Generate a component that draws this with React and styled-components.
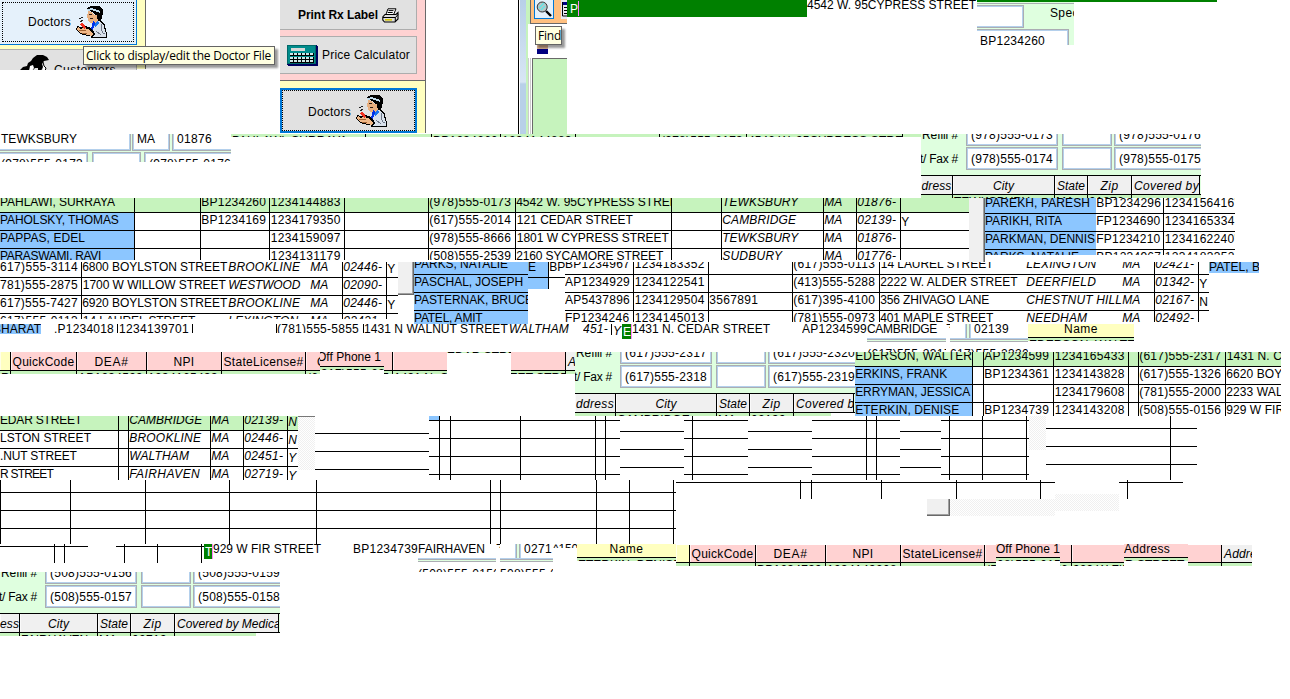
import React from "react";
import styled, { createGlobalStyle, css } from "styled-components";

const FONT = '"Liberation Sans", Arial, sans-serif';
const GREEN = "#c6f3bd";
const MINT = "#dfffdf";
const BLUE = "#8cc6ff";
const PINK = "#ffd2d2";
const YELLOW = "#ffffc0";
const GRAY = "#f0f0f0";

const Global = createGlobalStyle`
  body { margin: 0; background: #fff; overflow: hidden; }
  * { box-sizing: border-box; }
`;

const Page = styled.main`
  position: relative;
  display: flex;
  flex-direction: column;
  width: 1290px;
  height: 699px;
  overflow: hidden;
  background: #fff;
  font: 12px ${FONT};
  color: #000;
`;
const Band = styled.div`
  display: flex;
  align-items: flex-start;
  flex: none;
  height: ${(p) => p.$h}px;
`;
const Stack = styled.div`
  display: flex;
  flex-direction: column;
  flex: none;
  width: ${(p) => p.$w}px;
`;
const Line = styled.div`
  display: flex;
  flex: none;
  align-items: flex-start;
  height: ${(p) => p.$h}px;
  padding-left: ${(p) => p.$pl || 0}px;
`;
const Gap = styled.div`
  flex: none;
  width: ${(p) => p.$w || 1}px;
  height: ${(p) => p.$h || 1}px;
`;

/* A scrap of a window, cut at its edges. */
const Piece = styled.section`
  position: relative;
  flex: none;
  width: ${(p) => p.$w}px;
  height: ${(p) => p.$h}px;
  margin-top: ${(p) => p.$drop || 0}px;
  overflow: hidden;
  background: ${(p) => p.$bg || "transparent"};
`;
/* A scrap that covers part of another one. */
const Patch = styled.section`
  position: absolute;
  left: ${(p) => p.$x}px;
  top: ${(p) => p.$y || 0}px;
  width: ${(p) => p.$w}px;
  height: ${(p) => p.$h}px;
  overflow: hidden;
  background: ${(p) => p.$bg || "#fff"};
`;

/* ---------- text with whole-pixel digit advances ---------- */
const ctx = document.createElement("canvas").getContext("2d");
const measure = (s, font) => {
  ctx.font = font;
  return ctx.measureText(s).width;
};
const spacing = (s, w, { italic, bold, family = FONT, size = 12 }) => {
  const font = `${italic ? "italic " : ""}${bold ? "bold " : ""}${size}px ${family}`;
  const digits = (s.match(/\d/g) || []).length;
  const target = w || digits * 7 + measure(s.replace(/\d/g, ""), font);
  return (target - measure(s, font)) / s.length;
};

const Run = styled.span`
  display: block;
  flex: none;
  white-space: pre;
  line-height: 16px;
  font-style: ${(p) => (p.$italic ? "italic" : "normal")};
  font-weight: ${(p) => (p.$bold ? 700 : 400)};
  font-family: ${(p) => p.$family || FONT};
  font-size: ${(p) => p.$size || 12}px;
  letter-spacing: ${(p) => p.$ls}px;
  color: ${(p) => p.$color || "inherit"};
  margin-left: ${(p) => p.$ml || 0}px;
  margin-top: ${(p) => p.$mt || 0}px;
`;
const T = ({ s, w, italic, bold, family, size, color, ml, mt }) => (
  <Run
    $italic={italic}
    $bold={bold}
    $family={family}
    $size={size}
    $color={color}
    $ml={ml}
    $mt={mt}
    $ls={spacing(s, w, { italic, bold, family, size })}
  >
    {s}
  </Run>
);

/* A cell torn out of a table: text, sometimes with its right rule. */
const SlipBox = styled.div`
  flex: none;
  width: ${(p) => p.$w}px;
  height: ${(p) => p.$h || 15}px;
  overflow: hidden;
  background: ${(p) => p.$bg || "transparent"};
  border-right: ${(p) => (p.$line ? "1px solid #000" : "0")};
`;
const Slip = ({ w, h, bg, line, mt = -3, tw, ...rest }) => (
  <SlipBox $w={w} $h={h} $bg={bg} $line={line}>
    {rest.s && <T {...rest} w={tw} mt={mt} />}
  </SlipBox>
);

/* ---------- record tables ---------- */
const Rows = styled.div`
  display: flex;
  flex-direction: column;
  margin-top: ${(p) => p.$shift}px;
`;
const Row = styled.div`
  display: flex;
  flex: none;
  height: 18px;
  border-bottom: 1px solid #000;
  background: ${(p) => (p.$sel ? GREEN : "transparent")};
`;
const Cell = styled.div`
  display: flex;
  flex: none;
  width: ${(p) => p.$w}px;
  padding-left: ${(p) => p.$pad || 0}px;
  overflow: hidden;
  border-right: ${(p) => (p.$line ? "1px solid #000" : "0")};
  ${(p) => p.$bg && css`background: ${p.$bg};`}
`;

/* from: left edge of the cut; first: offset of the first rule.
   cols: [right edge, flags]; flags: l rule, i italic, b blue, y lowered, 0 no inset */
const Sheet = ({ from, w, h, first, cols, rows }) => (
  <Piece $w={w} $h={h}>
    <Rows $shift={first - 17}>
      {rows.map((r, ri) => (
        <Row key={ri} $sel={r.sel}>
          {cols.map(([end, f = "l"], i) => {
            const start = i ? cols[i - 1][0] : from - 1;
            const v = r.c && r.c[i];
            const [s, tw] = Array.isArray(v) ? v : [v];
            const pad = !s || f.includes("0") ? 0 : s[0] === "1" ? 0.8 : 0.2;
            return (
              <Cell
                key={i}
                $w={end - start}
                $line={f.includes("l")}
                $pad={pad}
                $bg={f.includes("b") && !r.sel ? BLUE : null}
              >
                {s && <T s={s} w={tw} italic={f.includes("i")} mt={f.includes("y") ? 1 : -1} />}
              </Cell>
            );
          })}
        </Row>
      ))}
    </Rows>
  </Piece>
);
const blank = (n) => Array.from({ length: n }, () => ({}));

/* ---------- column headings ---------- */
const HeadRow = styled.div`
  display: flex;
  height: ${(p) => p.$h}px;
  border-bottom: 1px solid #000;
`;
const HeadCell = styled.div`
  display: flex;
  flex: none;
  justify-content: ${(p) => (p.$start ? "flex-start" : "center")};
  width: ${(p) => p.$w}px;
  padding-top: ${(p) => p.$pt || 0}px;
  padding-left: ${(p) => (p.$start ? 2 : 0)}px;
  overflow: hidden;
  background: ${(p) => p.$bg};
  border-right: ${(p) => (p.$line ? "1px solid #000" : "0")};
  box-shadow: ${(p) => (p.$line ? "inset 1px 0 #ffffffa0" : "none")};
`;
/* items: [right edge, text, width, background, flags] */
const Headings = ({ from, h, pt, items }) => (
  <HeadRow $h={h}>
    {items.map(([end, s, w, bg, f = "l"], i) => (
      <HeadCell
        key={i}
        $w={end - (i ? items[i - 1][0] : from - 1)}
        $bg={bg}
        $pt={pt}
        $line={f.includes("l")}
        $start={f.includes("s")}
      >
        {s && <T s={s} w={w} italic={f.includes("i")} />}
      </HeadCell>
    ))}
  </HeadRow>
);
const Strip = styled.div`
  display: flex;
  align-items: flex-start;
  width: ${(p) => p.$w}px;
  height: ${(p) => p.$h}px;
  overflow: hidden;
  background: ${GREEN};
`;
const StripRow = ({ from, w, h, cols, vals }) => (
  <Strip $w={w} $h={h}>
    {cols.map((end, i) => (
      <Cell key={i} $w={end - (i ? cols[i - 1] : from - 1)} $line $pad={vals[i] ? 1 : 0}>
        {vals[i] ? <T s={vals[i]} mt={-1} /> : <Gap $h={h} />}
      </Cell>
    ))}
  </Strip>
);
const HeadScrap = ({ w, h, s, tw, bg, vals, center, ml = 0 }) => (
  <>
    <HeadRow $h={h}>
      <HeadCell $w={w} $bg={bg} $start={!center}>
        <T s={s} w={tw} mt={-3} ml={ml} />
      </HeadCell>
    </HeadRow>
    <Strip $w={w} $h={3}>
      <T s={vals} ml={1} mt={-1} />
    </Strip>
  </>
);

/* ---------- entry form ---------- */
const Field = styled.div`
  flex: none;
  display: flex;
  width: ${(p) => p.$w}px;
  height: 23px;
  margin-left: ${(p) => p.$ml || 0}px;
  padding: ${(p) => p.$pt ?? 3}px 0 0 ${(p) => p.$pl ?? 4}px;
  overflow: hidden;
  background: #fff;
  border: 1px solid #abadb3;
  box-shadow: inset 0 0 0 1px #b4d0ec;
`;
const FormRow = styled.div`
  display: flex;
  flex: none;
  height: 23px;
  margin-top: ${(p) => p.$mt}px;
`;
const Label = styled.div`
  display: flex;
  flex: none;
  justify-content: flex-end;
  width: 37px;
  padding-top: 4px;
  margin-right: 8px;
`;
const FormHead = styled.div`
  margin-top: 5px;
  border-top: 1px solid #000;
`;

const Form = ({ p, cols, heads, tail, tailW }) => (
  <Piece $w={280} $h={64}>
    <Piece $w={280} $h={61} $bg={MINT}>
      <FormRow $mt={-11}>
        <Label><T s="Refill #" w={36} /></Label>
        <Field $w={92}><T s={p[0]} /></Field>
        <Field $w={50} $ml={4} />
        <Field $w={100} $ml={2}><T s={p[1]} /></Field>
      </FormRow>
      <FormRow $mt={1}>
        <Label><T s="t/ Fax #" w={38} /></Label>
        <Field $w={92}><T s={p[2]} /></Field>
        <Field $w={50} $ml={4} />
        <Field $w={100} $ml={2}><T s={p[3]} /></Field>
      </FormRow>
      <FormHead>
        <Headings
          from={0}
          h={19}
          pt={2}
          items={cols.map((c, i) => [c, heads[i][0], heads[i][1], GRAY, "li" + (i === 4 ? "s" : "")])}
        />
      </FormHead>
    </Piece>
    <StripRow from={0} w={tailW} h={3} cols={cols.slice(0, 4)} vals={tail} />
  </Piece>
);

/* ---------- buttons and tooltips ---------- */
const Button = styled.div`
  position: relative;
  display: flex;
  flex: none;
  align-items: flex-start;
  width: ${(p) => p.$w}px;
  height: ${(p) => p.$h}px;
  margin: ${(p) => p.$m || "0"};
  padding: ${(p) => p.$p || "0"};
  background: ${(p) => (p.$hot ? "#e5f1fb" : "#e1e1e1")};
  border: ${(p) => (p.$focus ? "2px solid #0078d7" : p.$hot ? "1px solid #0078d7" : "1px solid #adadad")};
  border-left-width: ${(p) => (p.$flush ? 0 : p.$focus ? 2 : 1)}px;
`;
const FocusRing = styled.i`
  position: absolute;
  inset: ${(p) => p.$inset};
  border: 1px dotted #000;
`;
const Tip = styled.div`
  position: absolute;
  left: ${(p) => p.$x}px;
  top: ${(p) => p.$y}px;
  display: flex;
  width: ${(p) => p.$w}px;
  height: ${(p) => p.$h}px;
  padding: 1px 0 0 2px;
  background: #ffffe1;
  border: 1px solid #646464;
  box-shadow: 3px 3px 2px #0006;
`;
const Vert = styled.div`
  flex: none;
  width: ${(p) => p.$w}px;
  height: 134px;
  background: ${(p) => p.$bg};
`;
const Panel = styled.div`
  flex: none;
  width: ${(p) => p.$w}px;
  height: ${(p) => p.$h}px;
  padding-top: ${(p) => p.$pt || 0}px;
  background: ${(p) => p.$bg};
  border-right: 1px solid #696969;
  border-bottom: ${(p) => (p.$bb ? "1px solid #696969" : "0")};
`;
const Icon = styled.svg`
  flex: none;
  display: block;
  margin: ${(p) => p.$m || 0};
`;

const Doctor = ({ m }) => (
  <Icon width="33" height="33" viewBox="0 0 33 33" $m={m} shapeRendering="crispEdges">
    <path d="M19 14h4l4 2 2 3 1 5 1 3v5H15l-1-5 2-8z" fill="#000" />
    <path d="M19 15h4l3 2 2 3 1 5 1 2v4H16l-1-4 2-8z" fill="#d8e0ea" />
    <path d="M25 18v5l2 4h2M20 25l5 4" stroke="#707888" fill="none" />
    <path d="M10 3l2-2 4-1h6l3 1 2 3v4l-1 3-1 4h-3l-2-5-3-4-4-1z" fill="#000" />
    <path d="M12 5l4 1 2 3h3v2l1 3-3 3h-4l-2-1-1-3-1-2z" fill="#e8b080" />
    <path d="M11 3l5-1 8 3v2l-8-3-4 1z" fill="#c0dcec" />
    <path d="M13 8h3v1h-3zM14 12h3v1h-3z" fill="#302018" />
    <path d="M17 15l2 2-2 7v4l-2-2-1-3 2-3z" fill="#0030e8" />
    <path d="M22 14l1 3-4 4-1-1 2-4z" fill="#1874f0" />
    <path d="M1 20l3 1 4-1 5 1 4 3 2 4-2 3-5-1-5-1-4-2-3-3z" fill="#000" />
    <path d="M2 21l2 2 4-1 4 1 3 2 2 3-1 2-4-1-5-1-4-2-2-3z" fill="#f0b888" />
    <path d="M3 24l4 1 3-1M6 27l5 1" stroke="#a06030" fill="none" />
    <path d="M4 18l2-1 3 3 1 2-2 1-2-2z" fill="#f03020" />
    <path d="M3 12h2v1H3zM5 11h2v1H5zM4 15h1v-1h2v1H6v1H4z" fill="#222" />
  </Icon>
);
const Printer = () => (
  <Icon width="17" height="16" viewBox="0 0 17 16" $m="1px 0 0 4px">
    <path d="M6 .8h8l-2.5 6H3.8z" fill="#fff" stroke="#000" />
    <path d="M6.5 2.6h5M5.7 4.5h5" stroke="#000" />
    <path d="M3 6.5h11l2-2v6.5l-3 3H2.5L.8 12V9z" fill="#ddd" stroke="#000" strokeWidth="1.1" />
    <path d="M1 9.5h12.5L16 6.5M13.3 9.5v4.3" stroke="#000" fill="none" />
    <path d="M3 11.8h7" stroke="#d8c800" strokeWidth="1.6" />
  </Icon>
);
const Calculator = () => (
  <Icon width="31" height="21" viewBox="0 0 31 21" $m="8px 4px 0 7px" shapeRendering="crispEdges">
    <path d="M0 0h30v1h1v20H1v-1H0z" fill="#000060" />
    <path d="M0 0h29v19H0z" fill="#006868" />
    <path d="M1 1h27v17H1z" fill="#008c8c" />
    <path d="M4 3h14v3H4z" fill="#d8d8d8" />
    {[0, 1, 2, 3, 4, 5].map((i) => [8, 12, 15].map((y) => (
      <g key={i + "-" + y}>
        <rect x={3 + i * 4} y={y} width="4" height="3" fill="#000" />
        <rect x={3 + i * 4} y={y} width="3" height="2" fill="#d0e8e8" />
      </g>
    )))}
  </Icon>
);
const Customers = () => (
  <Icon width="30" height="16" viewBox="0 0 30 16" $m="5px 0 0 20px">
    <path d="M0 15l3-3 4-1 1-3 3-2 2-3 4-3 6 0 4 2 2 3-5 1-2 3 1 3-2 4h-3l0-3-3 0-3 3H0z" fill="#000" />
    <path d="M10 11l3-1 1 3-2 3H9z" fill="#fff" />
    <path d="M23 7l1 4 2 2-1 3h-2" stroke="#000" fill="#fff" />
  </Icon>
);
const Magnifier = () => (
  <Icon width="16" height="17" viewBox="0 0 16 17" $m="1px 0 0 1px">
    <circle cx="6.2" cy="6" r="5" fill="#b8c4c8" stroke="#333" />
    <path d="M3 7l5-5M5 9l4-4" stroke="#5ee8e8" strokeWidth="1.3" />
    <path d="M10 10l5 5" stroke="#000" strokeWidth="2.4" />
  </Icon>
);

const Toolbar = styled.div`
  display: flex;
  width: 37px;
  height: 24px;
  margin-left: 2px;
  padding-left: 3px;
  background: #ffc080;
  border-left: 1px solid #696969;
  border-bottom: 1px solid #696969;
`;
const Pane = styled.div`
  flex: 1;
  height: 134px;
  background: ${GREEN};
`;
const Blank = styled.div`
  height: 34px;
  padding: 21px 0 0 9px;
  background: #fff;
`;
const Figure = styled.div`
  width: 11px;
  height: 9px;
  background: linear-gradient(#d8b090 0 4px, #000080 4px);
`;
const ListBox = styled.div`
  height: 76px;
  border-left: 3px double #ccc;
  background: #fff;
`;
const ListFill = styled.div`
  height: 76px;
  margin-left: 1px;
  background: ${GREEN};
  border-left: 1px solid #696969;
  border-top: 1px solid #696969;
`;
const ScrollTrack = styled.div`
  flex: none;
  width: 6px;
  height: 134px;
  background: linear-gradient(#b8d0e8, #d8e6f4 82px, #b8d0e8 84px);
`;

/* ---------- small parts ---------- */
const Dither = styled(Piece)`
  background: repeating-conic-gradient(#f0f0f0 0 25%, #fff 0 50%) 0 0 / 2px 2px;
  border-top: ${(p) => (p.$cap ? "1px solid #777" : "0")};
`;
const Thumb = styled(Piece)`
  background: ${GRAY};
  border-right: 1px solid #696969;
  border-bottom: ${(p) => (p.$bb ? "1px solid #696969" : "0")};
  box-shadow: inset -1px ${(p) => (p.$bb ? "-1px" : "0")} #a0a0a0;
`;
const Entry = styled(Piece)`
  display: flex;
  align-items: flex-start;
  padding: ${(p) => p.$pt || 0}px 0 0 ${(p) => p.$pl || 1}px;
  background: #008000;
  border-right: ${(p) => (p.$caret ? "1px solid #ff80ff" : "0")};
`;
const Caret = styled.i`
  width: 1px;
  height: 15px;
  background: #ff80ff;
`;
const Rule = styled.div`
  height: 4px;
  background: linear-gradient(#b4d0ec 0 1px, #abadb3 1px 2px, ${MINT} 2px 3px, #abadb3 3px);
`;
const Post = styled.div`
  flex: none;
  width: 6px;
  height: 14px;
  background: linear-gradient(90deg, #b4d0ec 0 1px, #abadb3 1px 2px, ${MINT} 2px 4px, #abadb3 4px 5px, #b4d0ec 5px);
`;
const Under = styled.div`
  height: 10px;
  padding-top: 4px;
  overflow: hidden;
`;
const BlueTail = styled.div`
  width: 21px;
  height: 11px;
  background: ${BLUE};
  border-right: 1px solid #000;
`;

export default function App() {
  return (
    <Page>
      <Global />

      <Band $h={134}>
        {/* side menu with the hovered button */}
        <Piece $w={146} $h={70}>
          <Panel $w={146} $h={70} $bg={YELLOW}>
            <Button $w={137} $h={46} $hot $flush $m="-1px 0 0" $p="14px 0 0 28px">
              <T s="Doctors" w={43} />
              <Doctor m="-8px 0 0 5px" />
              <FocusRing $inset="2px 2px 2px 2px" />
            </Button>
            <Button $w={137} $h={44} $flush $m="4px 0 0">
              <Customers />
              <T s="Customers" w={62} ml={4} mt={12} />
            </Button>
          </Panel>
        </Piece>
        <Gap $w={134} />

        {/* side menu with the focused button */}
        <Piece $w={146} $h={134}>
          <Panel $w={146} $h={82} $bg={PINK} $bb>
            <Button $w={137} $h={31} $flush $m="-1px 0 0" $p="7px 0 0 18px">
              <T s="Print Rx Label" w={80} bold />
              <Printer />
            </Button>
            <Button $w={137} $h={38} $flush $m="6px 0 0">
              <Calculator />
              <T s="Price Calculator" w={88} mt={10} />
            </Button>
          </Panel>
          <Panel $w={146} $h={52} $bg={YELLOW} $pt={7}>
            <Button $w={137} $h={45} $focus $p="13px 0 0 26px">
              <T s="Doctors" w={43} mt={1} />
              <Doctor m="-8px 0 0 5px" />
              <FocusRing $inset="0" />
            </Button>
          </Panel>
        </Piece>
        <Gap $w={92} />

        {/* window edge with the toolbar */}
        <Vert $w={1} $bg="#000" />
        <Vert $w={1} $bg="#fff" />
        <ScrollTrack />
        <Vert $w={2} $bg={GREEN} />
        <Piece $w={39} $h={134}>
          <Pane>
            <Toolbar>
              <Button $w={20} $h={20} $hot $m="-1px 0 0"><Magnifier /></Button>
              <Icon width="7" height="19" viewBox="0 0 7 19" $m="0 0 0 7px">
                <path d="M0 0h7v19H0z" fill="#e8e8f0" />
                <path d="M1 2h6v3H1z" fill="#000080" />
                <path d="M1.5 2v14H7M3 7.5h4M3 10.5h4M3 13.5h4" stroke="#000" fill="none" />
              </Icon>
            </Toolbar>
            <Blank><Figure /></Blank>
            <ListBox><ListFill /></ListBox>
          </Pane>
        </Piece>

        <Entry $w={240} $h={17} $pt={1} $pl={3}>
          <T s="P" color="#fff" />
          <Caret />
        </Entry>
        <Slip w={170} s="4542 W. 95CYPRESS STREET" tw={169} />

        <Stack $w={240}>
          <Piece $w={240} $h={2} $bg="#008000" />
          <Piece $w={97} $h={43} $bg={MINT}>
            <Piece $w={97} $h={1} $drop={1} $bg="#abadb3" />
            <FormRow $mt={1}>
              <Field $w={49} $ml={-2} />
              <T s="Specialty" w={52} ml={26} />
            </FormRow>
            <FormRow $mt={1}>
              <Field $w={94} $ml={-2}><T s="BP1234260" /></Field>
            </FormRow>
          </Piece>
        </Stack>
      </Band>
      <Tip $x={83} $y={46} $w={192} $h={19}>
        <T s="Click to display/edit the Doctor File" w={185} family='"Open Sans", sans-serif' />
      </Tip>
      <Tip $x={535} $y={26} $w={27} $h={19}>
        <T s="Find" w={23} family='"Open Sans", sans-serif' />
      </Tip>

      <Band $h={64}>
        <Piece $w={231} $h={28} $bg={MINT}>
          <FormRow $mt={-6}>
            <Field $w={134} $ml={-3} $pt={2} $pl={3}><T s="TEWKSBURY" w={76} /></Field>
            <Field $w={38} $ml={1} $pt={2}><T s="MA" /></Field>
            <Field $w={80} $ml={2} $pt={2} $pl={4}><T s="01876" /></Field>
          </FormRow>
          <FormRow $mt={1}>
            <Field $w={91} $ml={-3} $pl={3}><T s="(978)555-0173" /></Field>
            <Field $w={49} $ml={4} />
            <Field $w={100} $ml={3} $pl={4}><T s="(978)555-0176" /></Field>
          </FormRow>
        </Piece>
        <StripRow from={231} w={690} h={3} cols={[365, 431, 500, 575, 659, 746, 902]}
          vals={["PAHLAWI, SURRAYA", "", "BP1234260", "1234144883", "", "(978)555-0173", "4542 W. 95CYPRESS STREET"]} />
        <Form p={["(978)555-0173", "(978)555-0176", "(978)555-0174", "(978)555-0175"]}
          cols={[31, 133, 166, 210, 278]}
          heads={[["dress", 30], ["City", 21], ["State", 28], ["Zip", 18], ["Covered by", 65]]}
          tail={["", "TEWKSBURY", "MA", "01876"]} tailW={280} />
      </Band>

      <Band $h={64}>
        <Sheet from={0} w={969} h={62} first={14}
          cols={[[134, "lb0"], [200], [269], [344], [428], [515], [671], [721], [823, "li"], [856, "li"], [900, "li"], [967, "y"]]}
          rows={[
            { sel: 1, c: [["PAHLAWI, SURRAYA", 115], "", "BP1234260", "1234144883", "", "(978)555-0173", ["4542 W. 95CYPRESS STREET", 169], "", ["TEWKSBURY", 76], "MA", "01876-"] },
            { c: [["PAHOLSKY, THOMAS", 119], "", "BP1234169", "1234179350", "", "(617)555-2014", ["121 CEDAR STREET", 116], "", ["CAMBRIDGE", 74], "MA", "02139-", "Y"] },
            { c: [["PAPPAS, EDEL", 85], "", "", "1234159097", "", "(978)555-8666", ["1801 W CYPRESS STREET", 152], "", ["TEWKSBURY", 76], "MA", "01876-"] },
            { c: [["PARASWAMI, RAVI", 101], "", "", "1234131179", "", "(508)555-2539", ["2160 SYCAMORE STREET", 147], "", ["SUDBURY", 60], "MA", "01776-"] },
          ]} />
        <Thumb $w={16} $h={64} />
        <Sheet from={985} w={250} h={57} first={15}
          cols={[[1095, "b0"], [1163], [1250, ""]]}
          rows={[
            { c: [["PAREKH, PARESH", 105], "BP1234296", "1234156416'"] },
            { c: [["PARIKH, RITA", 77], "FP1234690", "1234165334"] },
            { c: [["PARKMAN, DENNIS", 110], "FP1234210", "1234162240'"] },
            { c: [["PARKS, NATALIE", 94], "BP1234967", "1234183352"] },
          ]} />
      </Band>

      <Band $h={62}>
        <Sheet from={0} w={398} h={57} first={15}
          cols={[[81, "l0"], [227, ""], [309, "i"], [342, "li"], [386, "li"], [396, "y"]]}
          rows={[
            { c: [["617)555-3114", 78], ["6800 BOYLSTON STREET", 145], ["BROOKLINE", 72], "MA", "02446-", "Y"] },
            { c: [["781)555-2875", 78], ["1700 W WILLOW STREET", 143], ["WESTWOOD", 72], "MA", "02090-"] },
            { c: [["617)555-7427", 78], ["6920 BOYLSTON STREET", 145], ["BROOKLINE", 72], "MA", "02446-", "Y"] },
            { c: [["617)555-0113", 78], ["14 LAUREL STREET", 113], ["LEXINGTON", 70], "MA", "02421-"] },
          ].map((r) => r)} />
        <Thumb $w={16} $h={33} $bb />
        <Sheet from={414} w={114} h={62} first={12} cols={[[540, "b0"]]}
          rows={[
            { c: [["PARKS, NATALIE", 94]] },
            { c: [["PASCHAL, JOSEPH", 109]] },
            { c: [["PASTERNAK, BRUCE", 119]] },
            { c: [["PATEL, AMIT", 69]] },
          ]} />
        <Stack $w={37}>
          <Sheet from={528} w={37} h={16} first={15} cols={[[548, "lb0"], [570, ""]]}
            rows={[{ c: ["E", "BP"] }]} />
          <BlueTail />
        </Stack>
        <Sheet from={565} w={644} h={60} first={12}
          cols={[[633, "l0"], [708], [792], [879], [1025, ""], [1121, "i"], [1154, "li"], [1198, "li"], [1230, "y"]]}
          rows={[
            { c: ["BP1234967", "1234183352", "", "(617)555-0113", ["14 LAUREL STREET", 113], ["LEXINGTON", 70], "MA", "02421-"] },
            { c: ["AP1234929", "1234122541", "", "(413)555-5288", ["2222 W. ALDER STREET", 138], ["DEERFIELD", 70], "MA", "01342-", "Y"] },
            { c: ["AP5437896", "1234129504", "3567891", "(617)395-4100", ["356 ZHIVAGO LANE", 109], ["CHESTNUT HILL", 96], "MA", "02167-", "N"] },
            { c: ["FP1234246", "1234145013", "", "(781)555-0973", ["401 MAPLE STREET", 113], ["NEEDHAM", 61], "MA", "02492-"] },
          ]} />
        <Slip w={50} h={11} bg={BLUE} s="PATEL, B" tw={51} />
      </Band>

      {/* loose cells */}
      <Band $h={28}>
        <Slip w={41} h={10} bg={BLUE} s="BHARAT" tw={48} ml={-7} />
        <Gap $w={13} />
        <Slip w={64} h={9} line s=".P1234018" tw={60} />
        <Slip w={75} h={9} line s="1234139701" ml={1} />
        <Gap $w={83} />
        <Slip w={1} h={9} line />
        <Slip w={87} h={9} line s="(781)555-5855" />
        <Slip w={145} s="1431 N WALNUT STREET" tw={144} />
        <Slip w={60} s="WALTHAM" tw={60} italic />
        <Gap $w={14} />
        <Slip w={29} h={11} line s="451-" italic />
        <Slip w={10} s="Y" italic ml={1} mt={-1} />
        <Entry $w={10} $h={15} $caret>
          <T s="E" color="#fff" />
        </Entry>
        <Slip w={170} s="1431 N. CEDAR STREET" tw={138} />
        <Slip w={65} s="AP1234599" />
        <Stack $w={79}>
          <Slip w={79} h={14} s="CAMBRIDGE" tw={70} />
          <Rule />
          <Under><T s="(617)555-2317" w={84} /></Under>
        </Stack>
        <Slip w={4} h={4} s="7" />
        <Stack $w={78}>
          <Line $h={14} $pl={15}>
            <Post />
            <Slip w={57} h={14} s="02139" ml={3} />
          </Line>
          <Rule />
          <Under><T s="617)555-2320" w={79} /></Under>
        </Stack>
        <Piece $w={106} $h={18}>
          <HeadScrap w={106} h={14} s="Name" tw={34} bg={YELLOW} vals="EDERSON, WALTER" center />
        </Piece>
      </Band>

      <Band $h={64}>
        <Piece $w={575} $h={22}>
          <Headings from={0} h={19} pt={2}
            items={[[10, "", 0, YELLOW], [76, "QuickCode", 62, PINK], [146, "DEA#", 34, PINK], [221, "NPI", 21, PINK],
              [305, "StateLicense#", 80, PINK], [392, "Off Phone 1", 64, PINK], [565, "", 0, PINK], [580, "Address", 45, GRAY, "is"]]} />
          <StripRow from={0} w={575} h={3} cols={[10, 76, 146, 221, 305, 392, 565]}
            vals={["R", "", "AP1234599", "1234165433", "", "(617)555-2317", "1431 N. CEDAR STREET STREET"]} />
          <Patch $x={320} $w={64} $h={22}>
            <HeadScrap w={64} h={15} s="Off Phone 1" tw={64} bg={PINK} vals="317)555-2317" ml={-5} />
          </Patch>
          <Patch $x={447} $w={64} $h={22}>
            <Strip $w={64} $h={1}><T s="EDAR STREET" mt={-3} /></Strip>
          </Patch>
        </Piece>
        <Form p={["(617)555-2317", "(617)555-2320", "(617)555-2318", "(617)555-2319"]}
          cols={[40, 141, 174, 218, 278]}
          heads={[["ddress", 38], ["City", 21], ["State", 28], ["Zip", 18], ["Covered by", 65]]}
          tail={["", "CAMBRIDGE", "MA", "02139"]} tailW={256} />
        <Sheet from={855} w={426} h={64} first={14}
          cols={[[972, "lb"], [983], [1053], [1128], [1138], [1225], [1300, ""]]}
          rows={[
            { sel: 1, c: [["EDERSON, WALTER", 117], "", "AP1234599", "1234165433", "", "(617)555-2317", ["1431 N. CEDAR", 89]] },
            { c: [["ERKINS, FRANK", 92], "", "BP1234361", "1234143828", "", "(617)555-1326", "6620 BOYLSTON"] },
            { c: [["ERRYMAN, JESSICA", 115], "", "", "1234179608", "", "(781)555-2000", "2233 WALNUT"] },
            { c: [["ETERKIN, DENISE", 104], "", "BP1234739", "1234143208", "", "(508)555-0156", "929 W FIR ST"] },
          ]} />
      </Band>

      <Band $h={64}>
        <Sheet from={0} w={298} h={64} first={14}
          cols={[[118, "l0"], [128], [210, "li"], [243, "li"], [287, "li"], [310, "iy"]]}
          rows={[
            { sel: 1, c: [["EDAR STREET", 82], "", ["CAMBRIDGE", 73], "MA", "02139-", "N"] },
            { c: [["LSTON STREET", 91], "", ["BROOKLINE", 72], "MA", "02446-", "N"] },
            { c: [[".NUT STREET", 77], "", ["WALTHAM", 60], "MA", "02451-", "Y"] },
            { c: [["R STREET", 53], "", ["FAIRHAVEN", 71], "MA", "02719-", "Y"] },
          ]} />
        <Dither $w={17} $h={54} $cap />
        {/* empty rows */}
        <Sheet from={315} w={114} h={64} first={17} cols={[[429, ""]]} rows={blank(3)} />
        <Piece $w={191} $h={64}>
          <Sheet from={429} w={191} h={64} first={4} cols={[[439], [450], [520], [595], [605], [640, ""]]} rows={blank(5)} />
          <Patch $x={0} $w={10} $h={4} $bg={BLUE} />
        </Piece>
        <Sheet from={620} w={64} h={64} first={15} cols={[[700, ""]]} rows={blank(3)} />
        <Sheet from={684} w={64} h={64} first={4} cols={[[692], [760, ""]]} rows={blank(5)} />
        <Sheet from={748} w={64} h={64} first={15} cols={[[820, ""]]} rows={blank(3)} />
        <Sheet from={812} w={88} h={64} first={4} cols={[[866], [876], [910, ""]]} rows={blank(5)} />
        <Sheet from={900} w={41} h={64} first={15} cols={[[950, ""]]} rows={blank(3)} />
        <Sheet from={941} w={88} h={64} first={4} cols={[[949], [982], [1026], [1040, ""]]} rows={blank(5)} />
        <Dither $w={17} $h={34} />
        <Sheet from={1046} w={151} h={64} first={12} cols={[[1170], [1200, ""]]} rows={blank(4)} />
      </Band>

      <Band $h={64}>
        <Sheet from={0} w={676} h={64} first={12}
          cols={[[0], [70], [145], [229], [316], [490], [500], [596], [629], [673], [690, ""]]} rows={blank(4)} />
        <Stack $w={379}>
          <Sheet from={676} w={379} h={19} first={2} cols={[[800], [811], [881], [956], [1040], [1060, ""]]} rows={blank(2)} />
          <Line $h={17} $pl={251}>
            <Thumb $w={23} $h={17} $bb />
            <Dither $w={105} $h={17} />
          </Line>
        </Stack>
        <Dither $w={64} $h={17} $drop={14} />
        <Sheet from={1119} w={64} h={19} first={2} cols={[[1127], [1190, ""]]} rows={blank(2)} />
      </Band>

      <Band $h={28}>
        <Sheet from={0} w={88} h={19} first={2} cols={[[54], [64], [90, ""]]} rows={blank(2)} />
        <Gap $w={28} />
        <Sheet from={116} w={88} h={19} first={2} cols={[[124], [157], [201], [210, ""]]} rows={blank(2)} />
        <Entry $w={9} $h={15} $caret>
          <T s="T" color="#fff" />
        </Entry>
        <Slip w={140} s="929 W FIR STREET" tw={108} />
        <Slip w={65} s="BP1234739" />
        <Stack $w={78}>
          <Slip w={78} h={14} s="FAIRHAVEN" tw={67} />
          <Rule />
          <Under><T s="(508)555-0156" /></Under>
        </Stack>
        <Slip w={4} h={4} s="7" />
        <Stack $w={53}>
          <Line $h={14} $pl={15}>
            <Post />
            <Slip w={32} h={14} s="0271" ml={3} />
          </Line>
          <Rule />
          <Under><T s="508)555-0159" /></Under>
        </Stack>
        <Slip w={24} h={4} s="^150" tw={25} />
        <Piece $w={99} $h={18}>
          <HeadScrap w={99} h={14} s="Name" tw={34} bg={YELLOW} vals="ETERKIN, DENISE" center />
        </Piece>
        <Piece $w={576} $h={22}>
          <Piece $w={576} $h={21} $drop={1}>
            <Headings from={676} h={18} pt={1}
              items={[[689, "", 0, YELLOW], [755, "QuickCode", 62, PINK], [825, "DEA#", 34, PINK], [900, "NPI", 21, PINK],
                [984, "StateLicense#", 80, PINK], [1071, "", 0, PINK], [1221, "", 0, PINK], [1270, "Address", 45, GRAY, "is"]]} />
            <StripRow from={676} w={576} h={3} cols={[689, 755, 825, 900, 984, 1071, 1221]}
              vals={["", "", "BP1234739", "1234143208", "", "(508)555-0156", "929 W FIR STREET"]} />
          </Piece>
          <Patch $x={320} $w={64} $h={22}>
            <HeadScrap w={64} h={14} s="Off Phone 1" tw={64} bg={PINK} vals="08)555-0156" ml={-2} />
          </Patch>
          <Patch $x={448} $w={64} $h={22}>
            <HeadScrap w={64} h={14} s="Address" tw={46} bg={PINK} vals="R STREET" ml={-2} />
          </Patch>
        </Piece>
      </Band>

      <Band $h={64}>
        <Form p={["(508)555-0156", "(508)555-0159", "(508)555-0157", "(508)555-0158"]}
          cols={[19, 97, 130, 174, 278]}
          heads={[["ess", 19], ["City", 21], ["State", 28], ["Zip", 18], ["Covered by Medicaid", 113]]}
          tail={["", "FAIRHAVEN", "MA", "02719"]} tailW={256} />
      </Band>
    </Page>
  );
}
